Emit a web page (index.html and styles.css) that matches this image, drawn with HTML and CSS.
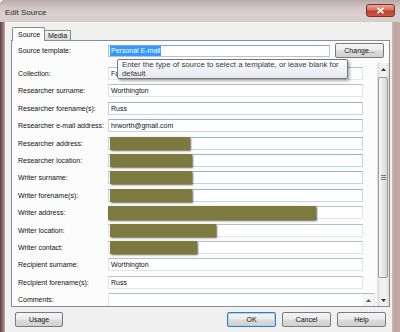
FILE: index.html
```html
<!DOCTYPE html>
<html lang="en">
<head>
    <meta charset="UTF-8">
    <meta name="viewport" content="width=device-width, initial-scale=1.0">
    <title>Edit Source</title>
    <link rel="stylesheet" href="styles.css">
</head>
<body>
    <div class="window">
        <div class="titlebar">
            <span class="title">Edit Source</span>
            <div class="close">
                <svg width="9" height="7" viewBox="0 0 9 7"><path d="M1.5 0.8 L7.5 6.2 M7.5 0.8 L1.5 6.2" stroke="#fff" stroke-width="1.8"/></svg>
            </div>
        </div>
        <div class="client">
            <div class="tabs">
                <div class="tab active">Source</div>
                <div class="tab">Media</div>
            </div>
            <div class="panel">
                <div class="template-row">
                    <span class="label">Source template:</span>
                    <div class="field focused"><span class="selected">Personal E-mail</span></div>
                    <div class="btn change">Change...</div>
                </div>
                <div class="scroller">
                    <div class="rows">
                        <div class="row"><span class="label">Collection:</span><div class="field">Fa</div></div>
                        <div class="row"><span class="label">Researcher surname:</span><div class="field">Worthington</div></div>
                        <div class="row"><span class="label">Researcher forename(s):</span><div class="field blue">Russ</div></div>
                        <div class="row"><span class="label">Researcher e-mail address:</span><div class="field blue">hrworth@gmail.com</div></div>
                        <div class="row"><span class="label">Researcher address:</span><div class="field blue"><div class="redact" style="width: 80px"></div></div></div>
                        <div class="row"><span class="label">Researcher location:</span><div class="field blue"><div class="redact" style="width: 82px"></div></div></div>
                        <div class="row"><span class="label">Writer surname:</span><div class="field blue"><div class="redact" style="width: 82px"></div></div></div>
                        <div class="row"><span class="label">Writer forename(s):</span><div class="field blue"><div class="redact" style="width: 82px"></div></div></div>
                        <div class="row"><span class="label">Writer address:</span><div class="field"><div class="redact wide" style="width: 208px"></div></div></div>
                        <div class="row"><span class="label">Writer location:</span><div class="field"><div class="redact" style="width: 106px"></div></div></div>
                        <div class="row"><span class="label">Writer contact:</span><div class="field"><div class="redact" style="width: 87px"></div></div></div>
                        <div class="row"><span class="label">Recipient surname:</span><div class="field">Worthington</div></div>
                        <div class="row"><span class="label">Recipient forename(s):</span><div class="field">Russ</div></div>
                        <div class="row"><span class="label">Comments:</span>
                            <div class="field area">
                                <div class="area-text"></div>
                                <div class="mini-scroll">
                                    <svg width="5" height="3" viewBox="0 0 5 3"><path d="M0 3 L2.5 0 L5 3 Z" fill="#555"/></svg>
                                </div>
                            </div>
                        </div>
                    </div>
                    <div class="vscroll">
                        <div class="arrow"><svg width="5" height="3" viewBox="0 0 5 3"><path d="M0 3 L2.5 0 L5 3 Z" fill="#333"/></svg></div>
                        <div class="thumb">
                            <svg width="5" height="5" viewBox="0 0 5 5"><path d="M0 0.5 H5 M0 2.5 H5 M0 4.5 H5" stroke="#777" stroke-width="1"/></svg>
                        </div>
                        <div class="track"></div>
                        <div class="arrow"><svg width="5" height="3" viewBox="0 0 5 3"><path d="M0 0 L2.5 3 L5 0 Z" fill="#333"/></svg></div>
                    </div>
                </div>
            </div>
            <div class="buttons">
                <div class="btn usage">Usage</div>
                <div class="spacer"></div>
                <div class="btn default">OK</div>
                <div class="btn">Cancel</div>
                <div class="btn">Help</div>
            </div>
        </div>
        <div class="tooltip">Enter the type of source to select a template, or leave blank for default</div>
    </div>
</body>
</html>
```

FILE: styles.css
```css
body {
    margin: 0;
    width: 400px;
    height: 332px;
    overflow: hidden;
    font-family: "Liberation Sans", Arial, sans-serif;
}
.window {
    position: relative;
    display: flex;
    flex-direction: column;
    width: 400px;
    height: 332px;
    box-sizing: border-box;
    padding: 0 8px 0 5px;
    background: linear-gradient(90deg, #5e4444 0, #7d6161 2px, #a58b8a 4px, #c7b4b3 5px, #c9b7b6 392px, #bfa3a1 395px, #c6aaa8 400px);
    border-top-left-radius: 5px;
}
.titlebar {
    display: flex;
    align-items: flex-start;
    height: 22px;
    margin: 0 -8px 0 -5px;
    padding: 0 5px 0 5px;
    background: linear-gradient(#b9a9a9, #d2c6c6 35%, #dbd1d1 70%, #d6caca);
    border-top-left-radius: 5px;
}
.title {
    margin-top: 8px;
    font-size: 8px;
    font-weight: normal;
    color: #2a2a2a;
}
.close {
    display: flex;
    align-items: center;
    justify-content: center;
    margin: 4px 0 0 auto;
    width: 29px;
    height: 13px;
    box-sizing: border-box;
    border: 1px solid #7a2e25;
    border-radius: 3px;
    background: linear-gradient(#e9a99d, #d5705f 45%, #c2402c 55%, #d05a3e);
}
.client {
    flex: 1;
    display: flex;
    flex-direction: column;
    padding: 5px 2px 0 6px;
    background: #f0f0f0;
}
.tabs {
    display: flex;
    align-items: flex-end;
    height: 14px;
    margin-bottom: -1px;
    padding-left: 1px;
}
.tab {
    height: 11px;
    box-sizing: border-box;
    padding: 0 3px;
    border: 1px solid #898c95;
    border-bottom: none;
    border-left: none;
    background: linear-gradient(#f3f3f3, #e6e6e6 50%, #dadada);
    font-size: 7px;
    line-height: 10px;
    color: #111;
}
.tab.active {
    position: relative;
    z-index: 1;
    height: 14px;
    width: 33px;
    padding-left: 5px;
    border-left: 1px solid #898c95;
    border-radius: 2px 2px 0 0;
    background: #fcfcfc;
    line-height: 13px;
}
.panel {
    flex: none;
    height: 267px;
    box-sizing: border-box;
    display: flex;
    flex-direction: column;
    padding-top: 2px;
    border: 1px solid #898c95;
    background: #fcfcfc;
}
.template-row {
    display: flex;
    align-items: center;
    height: 15px;
    padding-left: 6px;
}
.label {
    flex: none;
    width: 90px;
    font-size: 7px;
    color: #111;
    white-space: nowrap;
}
.field {
    position: relative;
    flex: none;
    width: 255px;
    height: 13px;
    box-sizing: border-box;
    padding: 0 2px;
    border: 1px solid #dfe5ec;
    border-top-color: #b6bec8;
    background: #fff;
    font-size: 7px;
    line-height: 11px;
    color: #111;
    white-space: nowrap;
}
.field.blue {
    border-color: #c3d6e6;
    border-top-color: #98b2c8;
}
.template-row .field {
    width: 222px;
    height: 12px;
    padding: 0 1px;
    border-color: #a9c6e0;
    border-top-color: #7fa4c6;
    line-height: 10px;
}
.selected {
    display: inline-block;
    padding: 0 1px;
    background: #3399ff;
    color: #fff;
    line-height: 10px;
}
.btn {
    flex: none;
    width: 49px;
    height: 15px;
    box-sizing: border-box;
    border: 1px solid #7a7a7a;
    border-radius: 2px;
    background: linear-gradient(#f4f4f4, #ebebeb 48%, #dcdcdc 52%, #d0d0d0);
    font-size: 7px;
    line-height: 13px;
    text-align: center;
    color: #111;
}
.change {
    margin-left: 5px;
}
.scroller {
    flex: 1;
    display: flex;
    margin-top: 5px;
    min-height: 0;
}
.rows {
    flex: 1;
    display: flex;
    flex-direction: column;
    gap: 4.4px;
    padding: 4px 0 0 6px;
    overflow: hidden;
}
.row {
    flex: none;
    display: flex;
    align-items: center;
    height: 13px;
}
.redact {
    position: absolute;
    top: -1px;
    bottom: -1px;
    left: 1px;
    background: #7c7a3f;
    border-radius: 1px;
    box-shadow: 1px 1px 2px rgba(40, 40, 20, 0.7);
}
.redact.wide {
    left: -1px;
    bottom: -2px;
}
.row:last-child {
    align-items: flex-start;
    height: 20px;
}
.row:last-child .label {
    margin-top: 3px;
}
.field.area {
    display: flex;
    width: 267px;
    height: 22px;
    padding: 0;
}
.area-text {
    flex: 1;
}
.mini-scroll {
    width: 11px;
    display: flex;
    justify-content: center;
    padding-top: 5px;
    background: #f4f4f4;
}
.mini-scroll svg {
    display: block;
}
.vscroll {
    flex: none;
    width: 12px;
    display: flex;
    flex-direction: column;
    background: linear-gradient(90deg, #dcdcdc, #efefef 30%, #f2f2f2 70%, #dedede);
}
.arrow {
    height: 12px;
    display: flex;
    align-items: center;
    justify-content: center;
}
.thumb {
    height: 201px;
    margin: 2px 1px 0;
    display: flex;
    align-items: center;
    justify-content: center;
    border: 1px solid #9a9a9a;
    border-radius: 2px;
    box-sizing: border-box;
    background: linear-gradient(90deg, #f7f7f7, #e6e6e6 50%, #d7d7d7);
}
.thumb svg, .arrow svg {
    display: block;
}
.track {
    flex: 1;
}
.buttons {
    display: flex;
    gap: 6px;
    margin-top: 5px;
    padding-right: 4px;
}
.usage {
    width: 48px;
    margin-left: 4px;
}
.spacer {
    flex: 1;
}
.btn.default {
    border-color: #3d7bad;
    box-shadow: inset 0 0 0 1px #a6d6f2;
}
.tooltip {
    position: absolute;
    left: 117px;
    top: 59px;
    width: 231px;
    height: 20px;
    box-sizing: border-box;
    padding: 0 4px;
    border: 1px solid #767676;
    border-radius: 2px;
    background: linear-gradient(#ffffff, #e5e6ef);
    box-shadow: 2px 2px 3px rgba(0, 0, 0, 0.3);
    font-size: 7.8px;
    line-height: 9px;
    color: #3a3a3a;
}
```
